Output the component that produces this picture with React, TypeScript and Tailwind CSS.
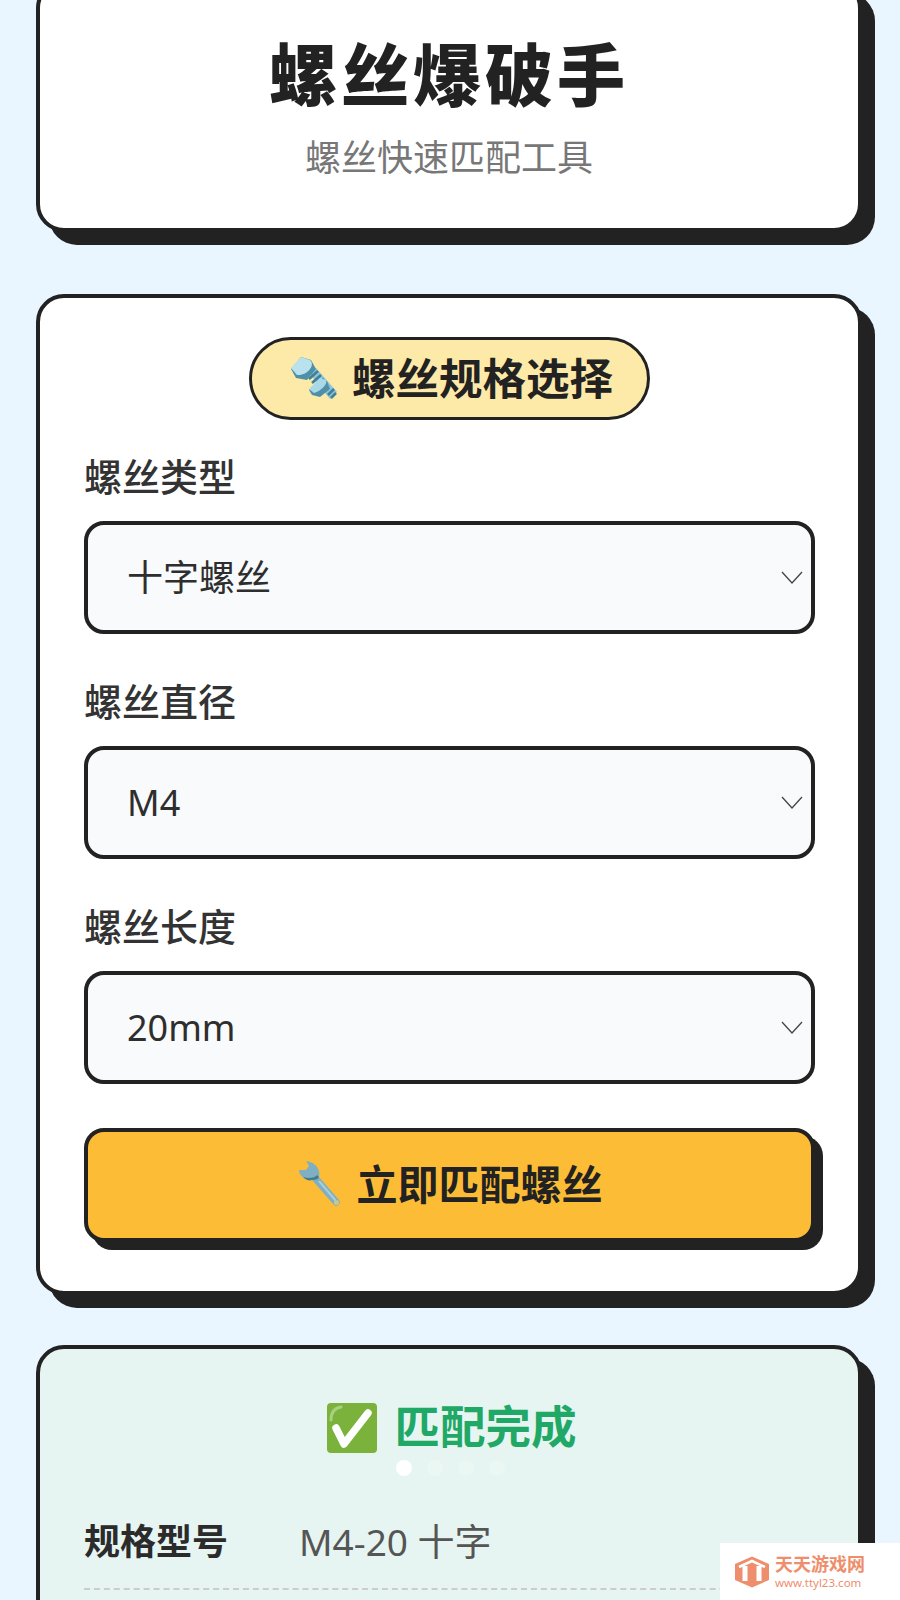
const CJK = { fontFamily: '"Noto Sans", "Noto Sans CJK SC", sans-serif' };

function BoltIcon() {
  return (
    <svg width="50" height="46" viewBox="7 8 50 46" className="shrink-0">
      <path d="M26 25 L33 20 L54 44 L47 51 Z" fill="#8cc4d8" />
      <path d="M26 31 L35 23 M29 35 L38 27 M32 39 L41 31 M45 47 L51 41 M48 50 L53 45" stroke="#3f7f98" strokeWidth="2.6" />
      <path d="M26 42 L37 31 L44 33 L47 41 L37 49 L29 47 Z" fill="#4f90a9" />
      <path d="M26 41 L37 30 L43 32 C45 36 38 43 31 45 Z" fill="#a9d9e8" />
      <path d="M8 21 L18 9 L28 12 L33 21 L24 32 L13 30 Z" fill="#4f90a9" />
      <path d="M8 20 L18 9 L27 12 C33 17 24 28 14 27 Z" fill="#b9e2ee" />
    </svg>
  );
}

function WrenchIcon() {
  return (
    <svg width="46" height="50" viewBox="8 4 46 50" className="shrink-0">
      <path d="M17 5 L20 10 L17 14 L10 14 C10 20 16 24 23 24 L45 49 C48 52 53 47 50 44 L30 21 C32 14 27 6 17 5 Z" fill="#7eafc3" />
      <path d="M14 21 C17 24 20 25 23 24 C27 24 29 23 30 21 L28 19 C26 22 20 23 14 21 Z" fill="#3f7c8c" />
      <path d="M30 25 L47 45" stroke="#a9cfdc" strokeWidth="2" />
      <circle cx="47.5" cy="46.5" r="2.6" fill="#c9c790" />
    </svg>
  );
}

function CheckIcon() {
  return (
    <svg width="52" height="52" viewBox="0 0 52 52" className="shrink-0 mt-[3px]">
      <rect x="1" y="1" width="50" height="50" rx="4" fill="#7ab23c" />
      <path d="M5 18 C5 10 9 6 15 5" stroke="#a9d07f" strokeWidth="3" fill="none" strokeLinecap="round" />
      <path d="M10 26 L18 42 L42 11" stroke="#ffffff" strokeWidth="7.5" fill="none" strokeLinecap="round" strokeLinejoin="round" />
    </svg>
  );
}

function Field({ label, value, last }: { label: string; value: string; last?: boolean }) {
  return (
    <div className={last ? "mb-[44px]" : "mb-[45px]"}>
      <div className="h-[44px] leading-[44px] text-[38px] text-[#333333] font-medium">{label}</div>
      <div className="mt-[23px] h-[113px] border-4 border-[#222222] rounded-[20px] bg-[#f8fafc] flex items-center justify-between pl-[39px] pr-[8px]">
        <span className="text-[36px] text-[#2e2e2e]">{value}</span>
        <svg width="22" height="13" viewBox="0 0 22 13" fill="none" stroke="#444444" strokeWidth="1.3">
          <path d="M1 1 L11 12 L21 1" />
        </svg>
      </div>
    </div>
  );
}

export default function App() {
  return (
    <div className="relative h-[1600px] w-[900px] overflow-hidden bg-[#eaf6ff]" style={CJK}>
      <div className="pl-[36px] pr-[38px] -mt-[20px] flex flex-col">
        <section className="mb-[62px] border-4 border-[#222222] rounded-[28px] bg-white shadow-[13px_13px_0_#222222] pt-[53px] pb-[50px] flex flex-col items-center">
          <h1 className="h-[76px] leading-[76px] text-[68px] font-black text-[#222222] tracking-[4px]">螺丝爆破手</h1>
          <p className="mt-[25px] h-[40px] leading-[40px] text-[36px] text-[#777777]">螺丝快速匹配工具</p>
        </section>

        <section className="mb-[50px] border-4 border-[#222222] rounded-[28px] bg-white shadow-[13px_13px_0_#222222] pt-[39px] pb-[49px] pl-[44px] pr-[43px]">
          <div className="flex justify-center mb-[34px]">
            <div className="h-[83px] w-[401px] border-[3px] border-[#222222] rounded-full bg-[#fde9a8] flex items-center justify-center gap-[12px] pl-[4px]">
              <BoltIcon />
              <span className="text-[43.5px] font-bold text-[#222222]">螺丝规格选择</span>
            </div>
          </div>
          <Field label="螺丝类型" value="十字螺丝" />
          <Field label="螺丝直径" value="M4" />
          <Field label="螺丝长度" value="20mm" last />
          <div className="h-[114px] border-4 border-[#222222] rounded-[20px] bg-[#fdbc35] shadow-[8px_8px_0_#222222] flex items-center justify-center gap-[14px]">
            <WrenchIcon />
            <span className="text-[41px] font-bold text-[#222222]">立即匹配螺丝</span>
          </div>
        </section>

        <section className="border-4 border-[#222222] rounded-[28px] bg-[#e6f5f1] shadow-[13px_13px_0_#222222] pt-[47px] pb-[40px] pl-[44px] pr-[43px]">
          <div className="h-[60px] flex items-center justify-center gap-[16px] ml-[4px]">
            <CheckIcon />
            <span className="text-[45.5px] font-bold text-[#1fa866]">匹配完成</span>
          </div>
          <div className="mt-[64px] h-[70px] border-b-2 border-dashed border-[#cccccc] flex items-start">
            <span className="w-[215px] h-[44px] leading-[44px] text-[36px] font-bold text-[#2b2b2b]">规格型号</span>
            <span className="h-[44px] leading-[44px] text-[37px] text-[#555555]">M4-20 十字</span>
          </div>
        </section>
      </div>

      <div className="absolute left-[396px] top-[1460px] flex gap-[15px]">
        <span className="w-[16px] h-[16px] rounded-full bg-white" />
        <span className="w-[16px] h-[16px] rounded-full bg-white/20" />
        <span className="w-[16px] h-[16px] rounded-full bg-white/20" />
        <span className="w-[16px] h-[16px] rounded-full bg-white/20" />
      </div>

      <div className="absolute left-[720px] top-[1543px] w-[180px] h-[57px] bg-white flex items-center pl-[14px] gap-[5px]">
        <svg width="36" height="32" viewBox="0 0 36 32" className="shrink-0">
          <path d="M18 0.5 L35 8 V24 L18 31.5 L1 24 V8 Z" fill="#ee8e6c" />
          <path d="M5 11 L18 5 L31 11" stroke="#ffffff" strokeWidth="2.5" fill="none" />
          <path d="M11 10 V25 M25 10 V25" stroke="#ffffff" strokeWidth="5" />
        </svg>
        <div className="flex flex-col text-[#ee8e6c]">
          <span className="text-[18px] leading-[20px] font-bold">天天游戏网</span>
          <span className="text-[11.5px] leading-[14px] mt-[2px]">www.ttyl23.com</span>
        </div>
      </div>
    </div>
  );
}
